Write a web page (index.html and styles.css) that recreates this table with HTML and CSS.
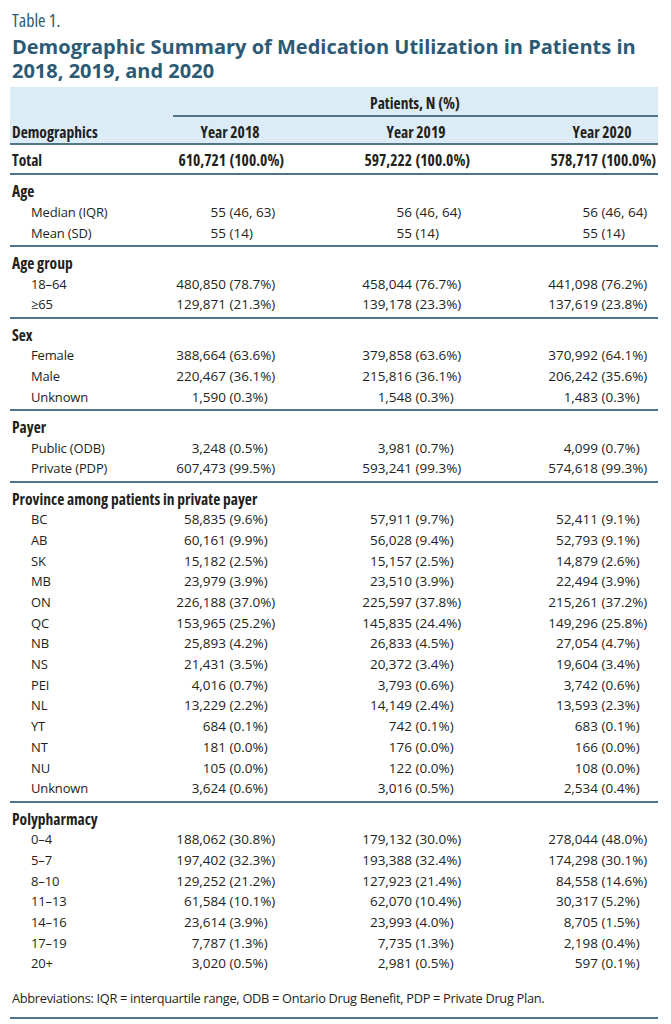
FILE: index.html
```html
<!DOCTYPE html>
<html lang="en">
<head>
<meta charset="utf-8">
<title>Table 1</title>
<link rel="stylesheet" href="styles.css">
</head>
<body>
<div class="page">
  <div class="tlabel">Table 1.</div>
  <h1 class="title">Demographic Summary of Medication Utilization in Patients in 2018, 2019, and 2020</h1>

  <div class="tbl">
    <div class="band">
      <div class="row r1">
        <div></div>
        <div class="patients">Patients, N (%)</div>
      </div>
      <div class="row r2">
        <div class="lab">Demographics</div>
        <div><span class="yh">Year 2018</span></div>
        <div><span class="yh">Year 2019</span></div>
        <div><span class="yh">Year 2020</span></div>
      </div>
    </div>

    <div class="row total">
      <div class="lab">Total</div>
      <div class="v"><span class="n">610,721</span><span class="p">(100.0%)</span></div>
      <div class="v"><span class="n">597,222</span><span class="p">(100.0%)</span></div>
      <div class="v"><span class="n">578,717</span><span class="p">(100.0%)</span></div>
    </div>

    <div class="sec">
      <div class="row"><div class="lab head">Age</div></div>
      <div class="row"><div class="lab sub">Median (IQR)</div>
        <div class="v"><span class="n">55</span><span class="p">(46, 63)</span></div>
        <div class="v"><span class="n">56</span><span class="p">(46, 64)</span></div>
        <div class="v"><span class="n">56</span><span class="p">(46, 64)</span></div></div>
      <div class="row"><div class="lab sub">Mean (SD)</div>
        <div class="v"><span class="n">55</span><span class="p">(14)</span></div>
        <div class="v"><span class="n">55</span><span class="p">(14)</span></div>
        <div class="v"><span class="n">55</span><span class="p">(14)</span></div></div>
    </div>

    <div class="sec">
      <div class="row"><div class="lab head">Age group</div></div>
      <div class="row"><div class="lab sub">18–64</div>
        <div class="v"><span class="n">480,850</span><span class="p">(78.7%)</span></div>
        <div class="v"><span class="n">458,044</span><span class="p">(76.7%)</span></div>
        <div class="v"><span class="n">441,098</span><span class="p">(76.2%)</span></div></div>
      <div class="row"><div class="lab sub">≥65</div>
        <div class="v"><span class="n">129,871</span><span class="p">(21.3%)</span></div>
        <div class="v"><span class="n">139,178</span><span class="p">(23.3%)</span></div>
        <div class="v"><span class="n">137,619</span><span class="p">(23.8%)</span></div></div>
    </div>

    <div class="sec">
      <div class="row"><div class="lab head">Sex</div></div>
      <div class="row"><div class="lab sub">Female</div>
        <div class="v"><span class="n">388,664</span><span class="p">(63.6%)</span></div>
        <div class="v"><span class="n">379,858</span><span class="p">(63.6%)</span></div>
        <div class="v"><span class="n">370,992</span><span class="p">(64.1%)</span></div></div>
      <div class="row"><div class="lab sub">Male</div>
        <div class="v"><span class="n">220,467</span><span class="p">(36.1%)</span></div>
        <div class="v"><span class="n">215,816</span><span class="p">(36.1%)</span></div>
        <div class="v"><span class="n">206,242</span><span class="p">(35.6%)</span></div></div>
      <div class="row"><div class="lab sub">Unknown</div>
        <div class="v"><span class="n">1,590</span><span class="p">(0.3%)</span></div>
        <div class="v"><span class="n">1,548</span><span class="p">(0.3%)</span></div>
        <div class="v"><span class="n">1,483</span><span class="p">(0.3%)</span></div></div>
    </div>

    <div class="sec">
      <div class="row"><div class="lab head">Payer</div></div>
      <div class="row"><div class="lab sub">Public (ODB)</div>
        <div class="v"><span class="n">3,248</span><span class="p">(0.5%)</span></div>
        <div class="v"><span class="n">3,981</span><span class="p">(0.7%)</span></div>
        <div class="v"><span class="n">4,099</span><span class="p">(0.7%)</span></div></div>
      <div class="row"><div class="lab sub">Private (PDP)</div>
        <div class="v"><span class="n">607,473</span><span class="p">(99.5%)</span></div>
        <div class="v"><span class="n">593,241</span><span class="p">(99.3%)</span></div>
        <div class="v"><span class="n">574,618</span><span class="p">(99.3%)</span></div></div>
    </div>

    <div class="sec">
      <div class="row"><div class="lab head wide">Province among patients in private payer</div></div>
      <div class="row"><div class="lab sub">BC</div>
        <div class="v"><span class="n">58,835</span><span class="p">(9.6%)</span></div>
        <div class="v"><span class="n">57,911</span><span class="p">(9.7%)</span></div>
        <div class="v"><span class="n">52,411</span><span class="p">(9.1%)</span></div></div>
      <div class="row"><div class="lab sub">AB</div>
        <div class="v"><span class="n">60,161</span><span class="p">(9.9%)</span></div>
        <div class="v"><span class="n">56,028</span><span class="p">(9.4%)</span></div>
        <div class="v"><span class="n">52,793</span><span class="p">(9.1%)</span></div></div>
      <div class="row"><div class="lab sub">SK</div>
        <div class="v"><span class="n">15,182</span><span class="p">(2.5%)</span></div>
        <div class="v"><span class="n">15,157</span><span class="p">(2.5%)</span></div>
        <div class="v"><span class="n">14,879</span><span class="p">(2.6%)</span></div></div>
      <div class="row"><div class="lab sub">MB</div>
        <div class="v"><span class="n">23,979</span><span class="p">(3.9%)</span></div>
        <div class="v"><span class="n">23,510</span><span class="p">(3.9%)</span></div>
        <div class="v"><span class="n">22,494</span><span class="p">(3.9%)</span></div></div>
      <div class="row"><div class="lab sub">ON</div>
        <div class="v"><span class="n">226,188</span><span class="p">(37.0%)</span></div>
        <div class="v"><span class="n">225,597</span><span class="p">(37.8%)</span></div>
        <div class="v"><span class="n">215,261</span><span class="p">(37.2%)</span></div></div>
      <div class="row"><div class="lab sub">QC</div>
        <div class="v"><span class="n">153,965</span><span class="p">(25.2%)</span></div>
        <div class="v"><span class="n">145,835</span><span class="p">(24.4%)</span></div>
        <div class="v"><span class="n">149,296</span><span class="p">(25.8%)</span></div></div>
      <div class="row"><div class="lab sub">NB</div>
        <div class="v"><span class="n">25,893</span><span class="p">(4.2%)</span></div>
        <div class="v"><span class="n">26,833</span><span class="p">(4.5%)</span></div>
        <div class="v"><span class="n">27,054</span><span class="p">(4.7%)</span></div></div>
      <div class="row"><div class="lab sub">NS</div>
        <div class="v"><span class="n">21,431</span><span class="p">(3.5%)</span></div>
        <div class="v"><span class="n">20,372</span><span class="p">(3.4%)</span></div>
        <div class="v"><span class="n">19,604</span><span class="p">(3.4%)</span></div></div>
      <div class="row"><div class="lab sub">PEI</div>
        <div class="v"><span class="n">4,016</span><span class="p">(0.7%)</span></div>
        <div class="v"><span class="n">3,793</span><span class="p">(0.6%)</span></div>
        <div class="v"><span class="n">3,742</span><span class="p">(0.6%)</span></div></div>
      <div class="row"><div class="lab sub">NL</div>
        <div class="v"><span class="n">13,229</span><span class="p">(2.2%)</span></div>
        <div class="v"><span class="n">14,149</span><span class="p">(2.4%)</span></div>
        <div class="v"><span class="n">13,593</span><span class="p">(2.3%)</span></div></div>
      <div class="row"><div class="lab sub">YT</div>
        <div class="v"><span class="n">684</span><span class="p">(0.1%)</span></div>
        <div class="v"><span class="n">742</span><span class="p">(0.1%)</span></div>
        <div class="v"><span class="n">683</span><span class="p">(0.1%)</span></div></div>
      <div class="row"><div class="lab sub">NT</div>
        <div class="v"><span class="n">181</span><span class="p">(0.0%)</span></div>
        <div class="v"><span class="n">176</span><span class="p">(0.0%)</span></div>
        <div class="v"><span class="n">166</span><span class="p">(0.0%)</span></div></div>
      <div class="row"><div class="lab sub">NU</div>
        <div class="v"><span class="n">105</span><span class="p">(0.0%)</span></div>
        <div class="v"><span class="n">122</span><span class="p">(0.0%)</span></div>
        <div class="v"><span class="n">108</span><span class="p">(0.0%)</span></div></div>
      <div class="row"><div class="lab sub">Unknown</div>
        <div class="v"><span class="n">3,624</span><span class="p">(0.6%)</span></div>
        <div class="v"><span class="n">3,016</span><span class="p">(0.5%)</span></div>
        <div class="v"><span class="n">2,534</span><span class="p">(0.4%)</span></div></div>
    </div>

    <div class="sec last">
      <div class="row"><div class="lab head">Polypharmacy</div></div>
      <div class="row"><div class="lab sub">0–4</div>
        <div class="v"><span class="n">188,062</span><span class="p">(30.8%)</span></div>
        <div class="v"><span class="n">179,132</span><span class="p">(30.0%)</span></div>
        <div class="v"><span class="n">278,044</span><span class="p">(48.0%)</span></div></div>
      <div class="row"><div class="lab sub">5–7</div>
        <div class="v"><span class="n">197,402</span><span class="p">(32.3%)</span></div>
        <div class="v"><span class="n">193,388</span><span class="p">(32.4%)</span></div>
        <div class="v"><span class="n">174,298</span><span class="p">(30.1%)</span></div></div>
      <div class="row"><div class="lab sub">8–10</div>
        <div class="v"><span class="n">129,252</span><span class="p">(21.2%)</span></div>
        <div class="v"><span class="n">127,923</span><span class="p">(21.4%)</span></div>
        <div class="v"><span class="n">84,558</span><span class="p">(14.6%)</span></div></div>
      <div class="row"><div class="lab sub">11–13</div>
        <div class="v"><span class="n">61,584</span><span class="p">(10.1%)</span></div>
        <div class="v"><span class="n">62,070</span><span class="p">(10.4%)</span></div>
        <div class="v"><span class="n">30,317</span><span class="p">(5.2%)</span></div></div>
      <div class="row"><div class="lab sub">14–16</div>
        <div class="v"><span class="n">23,614</span><span class="p">(3.9%)</span></div>
        <div class="v"><span class="n">23,993</span><span class="p">(4.0%)</span></div>
        <div class="v"><span class="n">8,705</span><span class="p">(1.5%)</span></div></div>
      <div class="row"><div class="lab sub">17–19</div>
        <div class="v"><span class="n">7,787</span><span class="p">(1.3%)</span></div>
        <div class="v"><span class="n">7,735</span><span class="p">(1.3%)</span></div>
        <div class="v"><span class="n">2,198</span><span class="p">(0.4%)</span></div></div>
      <div class="row"><div class="lab sub">20+</div>
        <div class="v"><span class="n">3,020</span><span class="p">(0.5%)</span></div>
        <div class="v"><span class="n">2,981</span><span class="p">(0.5%)</span></div>
        <div class="v"><span class="n">597</span><span class="p">(0.1%)</span></div></div>
    </div>

    <div class="foot">Abbreviations: IQR = interquartile range, ODB = Ontario Drug Benefit, PDP = Private Drug Plan.</div>
  </div>
</div>
</body>
</html>
```

FILE: styles.css
```css
* { box-sizing: border-box; }

html, body {
  margin: 0;
  padding: 0;
  background: #ffffff;
}

.page {
  width: 671px;
  padding: 10px 0 0 10px;
  font-family: "Open Sans", "DejaVu Sans", sans-serif;
  color: #231f20;
}

.tlabel {
  font-size: 18px;
  line-height: 20px;
  height: 20px;
  font-stretch: 75%;
  color: #2c5a74;
  padding-left: 2px;
}

.title {
  margin: 5px 0 0 0;
  padding-left: 2px;
  width: 648px;
  font-family: "Open Sans", Lato, sans-serif;
  font-weight: 700;
  font-size: 20px;
  line-height: 24px;
  color: #2c5a74;
}

.tbl {
  width: 648px;
  margin-top: 4px;
  font-size: 13.5px;
}

.row {
  display: grid;
  grid-template-columns: 163px 186px 186px 113px;
  height: 20.7px;
  line-height: 20.7px;
  white-space: nowrap;
}

.band {
  background: #dcecf6;
  padding-top: 5.5px;
  border-bottom: 2px solid #52748b;
  font-weight: 700;
  font-stretch: 75%;
  font-size: 15.5px;
}

.patients {
  grid-column: 2 / 5;
  text-align: center;
  border-bottom: 2px solid #52748b;
  height: 24px;
  padding-right: 1px;
}

.r1 {
  height: 24px;
}

.r2 {
  margin-top: 5px;
  height: 21.5px;
}

.yh {
  display: block;
  width: 114px;
  text-align: center;
}

.lab {
  padding-left: 2px;
}

.lab.sub {
  padding-left: 21px;
  font-size: 13px;
  letter-spacing: -0.15px;
}

.lab.head {
  font-weight: 700;
  font-stretch: 75%;
  font-size: 15.5px;
}

.lab.wide {
  grid-column: 1 / 5;
}

.total {
  font-weight: 700;
  font-stretch: 75%;
  font-size: 15.5px;
  height: auto;
  padding-top: 4.6px;
  padding-bottom: 3px;
  border-bottom: 2px solid #52748b;
  box-sizing: content-box;
}

.v {
  display: grid;
  grid-template-columns: 53px auto;
  column-gap: 3.5px;
}

.v .n {
  justify-self: end;
}

.sec {
  padding-top: 6px;
  padding-bottom: 1.6px;
  border-bottom: 2px solid #52748b;
}

.sec.last {
  border-bottom: none;
  padding-bottom: 0;
}

.foot {
  margin-top: 13.5px;
  padding-left: 2px;
  font-size: 12.8px;
  letter-spacing: -0.3px;
  line-height: 20.7px;
  padding-bottom: 8.3px;
  border-bottom: 2px solid #52748b;
}
```
